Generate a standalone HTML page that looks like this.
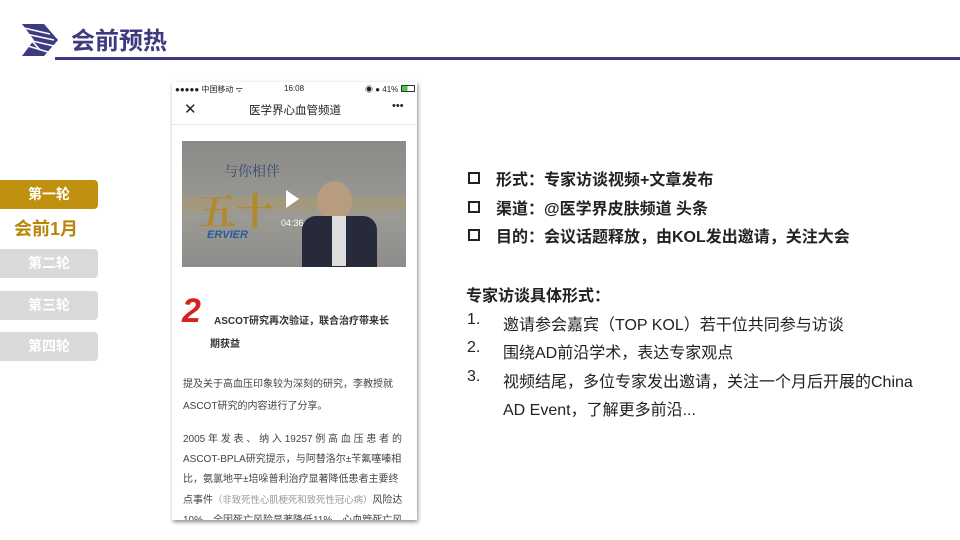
<!DOCTYPE html>
<html><head><meta charset="utf-8"><style>
*{margin:0;padding:0;box-sizing:border-box}
body{width:960px;height:540px;background:#fff;position:relative;overflow:hidden;font-family:"Liberation Sans","Noto Sans CJK SC",sans-serif;color:#222}
.a{position:absolute;white-space:nowrap}
.btn{position:absolute;left:0;width:98px;height:29px;border-radius:0 4px 4px 0;background:#d9d9d9;color:#fff;font-weight:bold;font-size:14px;text-align:center;line-height:29px}
.phone{position:absolute;left:172px;top:82px;width:245px;height:438px;background:#fff;box-shadow:1px 2px 4px rgba(0,0,0,.45);overflow:hidden}
.r{font-size:16px;font-weight:bold;color:#222}
.n{font-size:16px;color:#222}
.sq{position:absolute;left:468px;width:12px;height:12px;border:2.5px solid #222}
</style></head><body>
<svg class="a" style="left:20px;top:20px" width="42" height="38" viewBox="0 0 42 38">
<polygon points="2,4 24,4 38,20 24,36 2,36 14,20" fill="#3d3a80"/>
<g stroke="#fff" stroke-width="1.6"><line x1="4" y1="8" x2="30" y2="14"/><line x1="6" y1="14" x2="34" y2="20"/><line x1="8" y1="20" x2="34" y2="26"/><line x1="8" y1="26" x2="28" y2="32"/><line x1="4" y1="12" x2="20" y2="30"/></g></svg>
<div class="a" style="left:71px;top:21px;font-size:24px;font-weight:bold;color:#3d3a80">会前预热</div>
<div class="a" style="left:55px;top:57px;width:905px;height:3px;background:#3d3a80"></div>

<div class="btn" style="top:180px;background:#c0900f">第一轮</div>
<div class="a" style="left:14px;top:215px;font-size:18px;font-weight:bold;color:#b8860b">会前1月</div>
<div class="btn" style="top:249px">第二轮</div>
<div class="btn" style="top:291px">第三轮</div>
<div class="btn" style="top:332px">第四轮</div>

<div class="phone">
<div class="a" style="left:3px;top:2px;font-size:8px;color:#222">●●●●● 中国移动 ᯤ</div>
<div class="a" style="left:112px;top:2px;font-size:8px">16:08</div>
<div class="a" style="left:193px;top:2px;font-size:8px">◉ ● 41% <span style="display:inline-block;width:14px;height:7px;border:1px solid #333;background:linear-gradient(90deg,#4c4 45%,#fff 45%)"></span></div>
<div class="a" style="left:12px;top:18px;font-size:15px">✕</div>
<div class="a" style="left:77px;top:20px;font-size:11.5px">医学界心血管频道</div>
<div class="a" style="left:220px;top:18px;font-size:11px">•••</div>
<div class="a" style="left:0;top:42px;width:245px;height:1px;background:#e6e6e6"></div>
<div class="a" style="left:10px;top:59px;width:224px;height:126px;background:linear-gradient(180deg,#8a8a88,#9c9a94 60%,#8e8d8b);overflow:hidden">
 <div class="a" style="left:0;top:56px;width:224px;height:14px;background:#a89a70;opacity:.6"></div>
 <div class="a" style="left:42px;top:20px;font-size:14px;color:#3a4a70;font-family:'Noto Serif CJK SC',serif">与你相伴</div>
 <div class="a" style="left:16px;top:40px;font-size:38px;font-weight:bold;color:#b08a30;font-family:'Noto Serif CJK SC',serif">五十</div>
 <div class="a" style="left:25px;top:88px;font-size:11px;font-weight:bold;color:#2a5a9a;font-style:italic">ERVIER</div>
 <div class="a" style="left:135px;top:40px;width:35px;height:40px;border-radius:50%;background:#b89c80"></div>
 <div class="a" style="left:120px;top:75px;width:75px;height:55px;background:#262a3a;border-radius:14px 14px 0 0"></div>
 <div class="a" style="left:150px;top:75px;width:14px;height:50px;background:#ddd"></div>
 <div class="a" style="left:104px;top:49px;width:0;height:0;border-left:13px solid #fff;border-top:9px solid transparent;border-bottom:9px solid transparent"></div>
 <div class="a" style="left:99px;top:77px;font-size:9px;color:#fff">04:36</div>
</div>
<div class="a" style="left:10px;top:210px;font-size:34px;font-weight:bold;color:#d82020;font-style:italic">2</div>
<div class="a" style="left:42px;top:230px;font-size:10px;font-weight:bold;color:#333">ASCOT研究再次验证，联合治疗带来长</div>
<div class="a" style="left:38px;top:253px;font-size:10px;font-weight:bold;color:#333">期获益</div>
<div class="a" style="left:11px;top:292px;font-size:10px;line-height:22px;color:#444">提及关于高血压印象较为深刻的研究，李教授就<br>ASCOT研究的内容进行了分享。</div>
<div class="a" style="left:11px;top:348px;font-size:10px;line-height:20px;color:#444">2005 年 发 表 、 纳 入 19257 例 高 血 压 患 者 的<br>ASCOT-BPLA研究提示，与阿替洛尔±苄氟噻嗪相<br>比，氨氯地平±培哚普利治疗显著降低患者主要终<br>点事件<span style="color:#999;font-size:9.4px">（非致死性心肌梗死和致死性冠心病）</span>风险达<br>10%，全因死亡风险显著降低11%，心血管死亡风</div>
</div>

<div class="sq" style="top:172px"></div><div class="a r" style="left:496px;top:166px">形式：专家访谈视频+文章发布</div>
<div class="sq" style="top:201px"></div><div class="a r" style="left:496px;top:195px">渠道：@医学界皮肤频道 头条</div>
<div class="sq" style="top:229px"></div><div class="a r" style="left:496px;top:223px">目的：会议话题释放，由KOL发出邀请，关注大会</div>
<div class="a r" style="left:466px;top:282px">专家访谈具体形式：</div>
<div class="a n" style="left:467px;top:311px">1.</div><div class="a n" style="left:503px;top:311px">邀请参会嘉宾（TOP KOL）若干位共同参与访谈</div>
<div class="a n" style="left:467px;top:339px">2.</div><div class="a n" style="left:503px;top:339px">围绕AD前沿学术，表达专家观点</div>
<div class="a n" style="left:467px;top:368px">3.</div><div class="a n" style="left:503px;top:368px">视频结尾，多位专家发出邀请，关注一个月后开展的China</div>
<div class="a n" style="left:503px;top:396px">AD Event，了解更多前沿...</div>
</body></html>
